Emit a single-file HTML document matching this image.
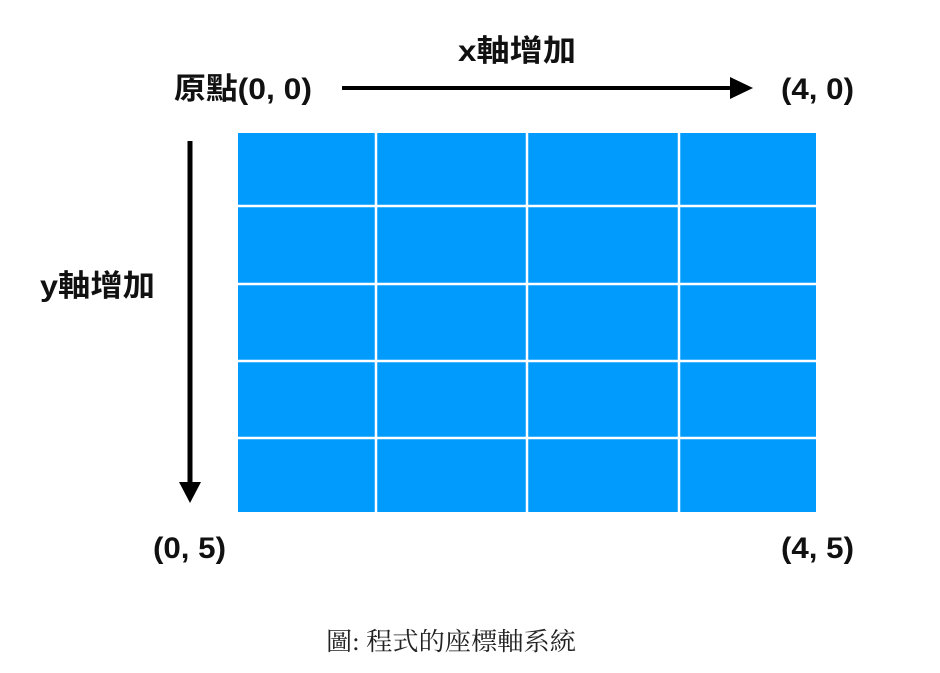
<!DOCTYPE html>
<html><head><meta charset="utf-8"><style>
html,body{margin:0;padding:0;background:#fff;width:940px;height:673px;overflow:hidden}
svg{display:block}
.b{font-family:"Liberation Sans","Noto Sans CJK TC",sans-serif;font-weight:bold;font-size:30px;fill:#111}
.c{font-family:"Liberation Serif","Noto Serif CJK SC",serif;font-size:25px;fill:#222}
</style></head><body>
<svg width="940" height="673" viewBox="0 0 940 673">
<rect x="238" y="133" width="578" height="379" fill="#009bfd"/>
<g stroke="#fff" stroke-width="2.5">
<line x1="376" y1="133" x2="376" y2="512"/>
<line x1="527" y1="133" x2="527" y2="512"/>
<line x1="679" y1="133" x2="679" y2="512"/>
<line x1="238" y1="206" x2="816" y2="206"/>
<line x1="238" y1="284" x2="816" y2="284"/>
<line x1="238" y1="361" x2="816" y2="361"/>
<line x1="238" y1="438" x2="816" y2="438"/>
</g>
<line x1="342" y1="88" x2="735" y2="88" stroke="#000" stroke-width="4"/>
<polygon points="730,77 753,88 730,99" fill="#000"/>
<line x1="190" y1="141" x2="190" y2="485" stroke="#000" stroke-width="5"/>
<polygon points="179,482 201,482 190,503" fill="#000"/>
<text class="b" x="458" y="61" textLength="118" lengthAdjust="spacingAndGlyphs">x軸增加</text>
<text class="b" x="174" y="99" textLength="138" lengthAdjust="spacingAndGlyphs">原點(0, 0)</text>
<text class="b" x="781" y="99" textLength="73" lengthAdjust="spacingAndGlyphs">(4, 0)</text>
<text class="b" x="40" y="296" textLength="115" lengthAdjust="spacingAndGlyphs">y軸增加</text>
<text class="b" x="153" y="558" textLength="73" lengthAdjust="spacingAndGlyphs">(0, 5)</text>
<text class="b" x="781" y="558" textLength="73" lengthAdjust="spacingAndGlyphs">(4, 5)</text>
<text class="c" x="326" y="650" textLength="250" lengthAdjust="spacingAndGlyphs">圖: 程式的座標軸系統</text>
</svg>
</body></html>
